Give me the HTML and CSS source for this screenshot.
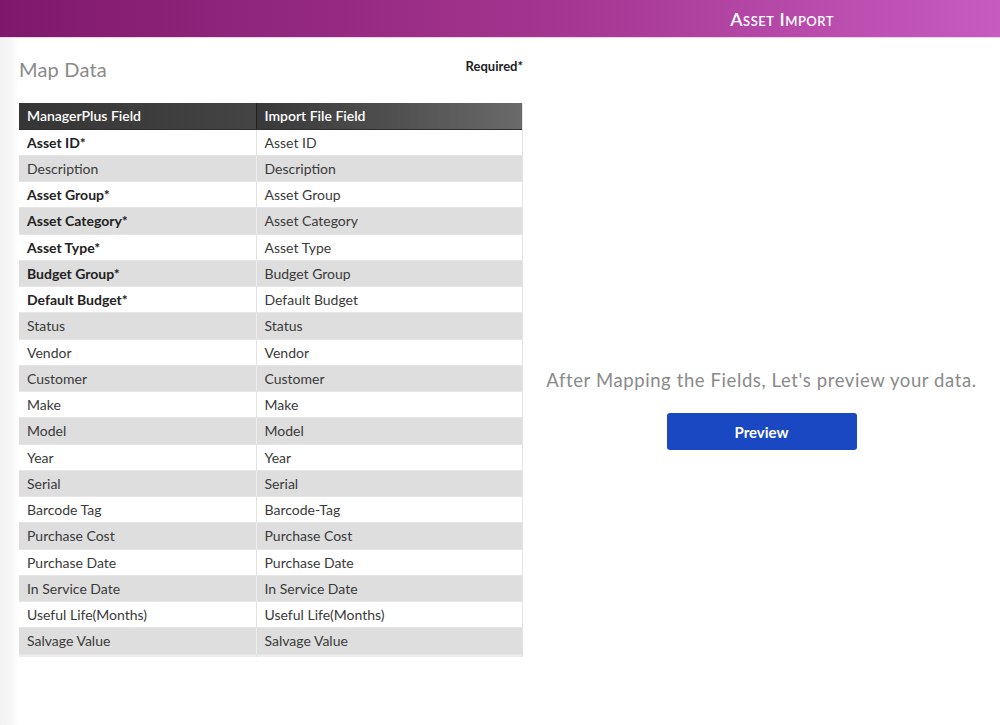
FILE: index.html
```html
<!DOCTYPE html>
<html>
<head>
<meta charset="utf-8">
<link rel="stylesheet" href="styles.css">
</head>
<body>
<header class="topbar">
  <h1 class="title">Asset Import</h1>
</header>
<div class="page">
  <aside class="edge"></aside>
  <section class="left">
    <div class="left-head">
      <h2 class="map-title">Map Data</h2>
      <span class="required">Required*</span>
    </div>
    <div class="table-wrap">
      <table class="map">
        <thead>
          <tr><th class="c1">ManagerPlus Field</th><th>Import File Field</th></tr>
        </thead>
        <tbody>
          <tr><td class="req">Asset ID*</td><td>Asset ID</td></tr>
          <tr><td>Description</td><td>Description</td></tr>
          <tr><td class="req">Asset Group*</td><td>Asset Group</td></tr>
          <tr><td class="req">Asset Category*</td><td>Asset Category</td></tr>
          <tr><td class="req">Asset Type*</td><td>Asset Type</td></tr>
          <tr><td class="req">Budget Group*</td><td>Budget Group</td></tr>
          <tr><td class="req">Default Budget*</td><td>Default Budget</td></tr>
          <tr><td>Status</td><td>Status</td></tr>
          <tr><td>Vendor</td><td>Vendor</td></tr>
          <tr><td>Customer</td><td>Customer</td></tr>
          <tr><td>Make</td><td>Make</td></tr>
          <tr><td>Model</td><td>Model</td></tr>
          <tr><td>Year</td><td>Year</td></tr>
          <tr><td>Serial</td><td>Serial</td></tr>
          <tr><td>Barcode Tag</td><td>Barcode-Tag</td></tr>
          <tr><td>Purchase Cost</td><td>Purchase Cost</td></tr>
          <tr><td>Purchase Date</td><td>Purchase Date</td></tr>
          <tr><td>In Service Date</td><td>In Service Date</td></tr>
          <tr><td>Useful Life(Months)</td><td>Useful Life(Months)</td></tr>
          <tr><td>Salvage Value</td><td>Salvage Value</td></tr>
          <tr class="extra"><td></td><td></td></tr>
        </tbody>
      </table>
    </div>
  </section>
  <section class="right">
    <p class="hint">After Mapping the Fields, Let's preview your data.</p>
    <button class="preview">Preview</button>
  </section>
</div>
</body>
</html>
```

FILE: styles.css
```css
* { box-sizing: border-box; }
html, body { margin: 0; padding: 0; }
body {
  font-family: Lato, "Open Sans", sans-serif;
  background: #fff;
  width: 1000px;
  height: 725px;
  overflow: hidden;
}
.topbar {
  height: 38px;
  background: linear-gradient(90deg, #7f186c 0%, #a43590 55%, #c75bbf 100%);
  border-bottom: 1px solid #e9d4e6;
  display: flex;
  justify-content: flex-end;
  align-items: center;
  padding-right: 166px;
}
.title {
  margin: 0;
  color: #fff;
  font-size: 18px;
  font-weight: 600;
  font-variant: small-caps;
  letter-spacing: 0.5px;
}
.page {
  display: flex;
  height: 687px;
}
.edge {
  width: 19px;
  flex: none;
  background: linear-gradient(90deg, #f2f2f2 0%, #f6f6f6 55%, #fff 100%);
}
.left {
  width: 504px;
  flex: none;
}
.left-head {
  display: flex;
  justify-content: space-between;
  align-items: flex-start;
  height: 65px;
  padding-top: 19px;
}
.map-title {
  margin: 0;
  font-size: 20px;
  font-weight: 400;
  color: #8a8a8a;
  line-height: 24px;
  letter-spacing: 0.2px;
}
.required {
  font-size: 13px;
  font-weight: 700;
  color: #222;
  margin-top: 1px;
}
.table-wrap {
  height: 554px;
  overflow: hidden;
  border-right: 1px solid #e4e4e4;
}
.map {
  width: 504px;
  border-collapse: collapse;
  font-size: 14px;
  color: #3a3a3a;
}
.map th {
  height: 26px;
  text-align: left;
  font-weight: 600;
  color: #fff;
  padding: 0 8px;
  background: linear-gradient(90deg, #383838 0%, #4f4f4f 50%, #6a6a6a 100%);
  border-bottom: 1px solid #2f2f2f;
}
.map th.c1 {
  width: 237px;
  border-right: 1px solid #1f1f1f;
  background: linear-gradient(90deg, #353535 0%, #444 100%);
}
.map td {
  height: 26.25px;
  padding: 0 8px;
  border-right: 1px solid #e2e2e2;
  border-bottom: 1px solid #e6e6e6;
}
.map tbody tr:nth-child(even) td {
  background: #dedede;
  border-right-color: #eeeeee;
}
.map td.req {
  font-weight: 700;
  color: #222;
}
.map tr.extra td {
  background: #ececec;
}
.right {
  flex: 1;
  display: flex;
  flex-direction: column;
  align-items: center;
  padding-top: 328px;
}
.hint {
  margin: 0;
  font-size: 18.5px;
  color: #8a8a8a;
  line-height: 28px;
  letter-spacing: 0.6px;
}
.preview {
  margin-top: 19px;
  width: 190px;
  height: 37px;
  border: none;
  border-radius: 3px;
  background: #1a48c3;
  color: #fff;
  font-family: Lato, "Open Sans", sans-serif;
  font-size: 15px;
  font-weight: 700;
}
```
